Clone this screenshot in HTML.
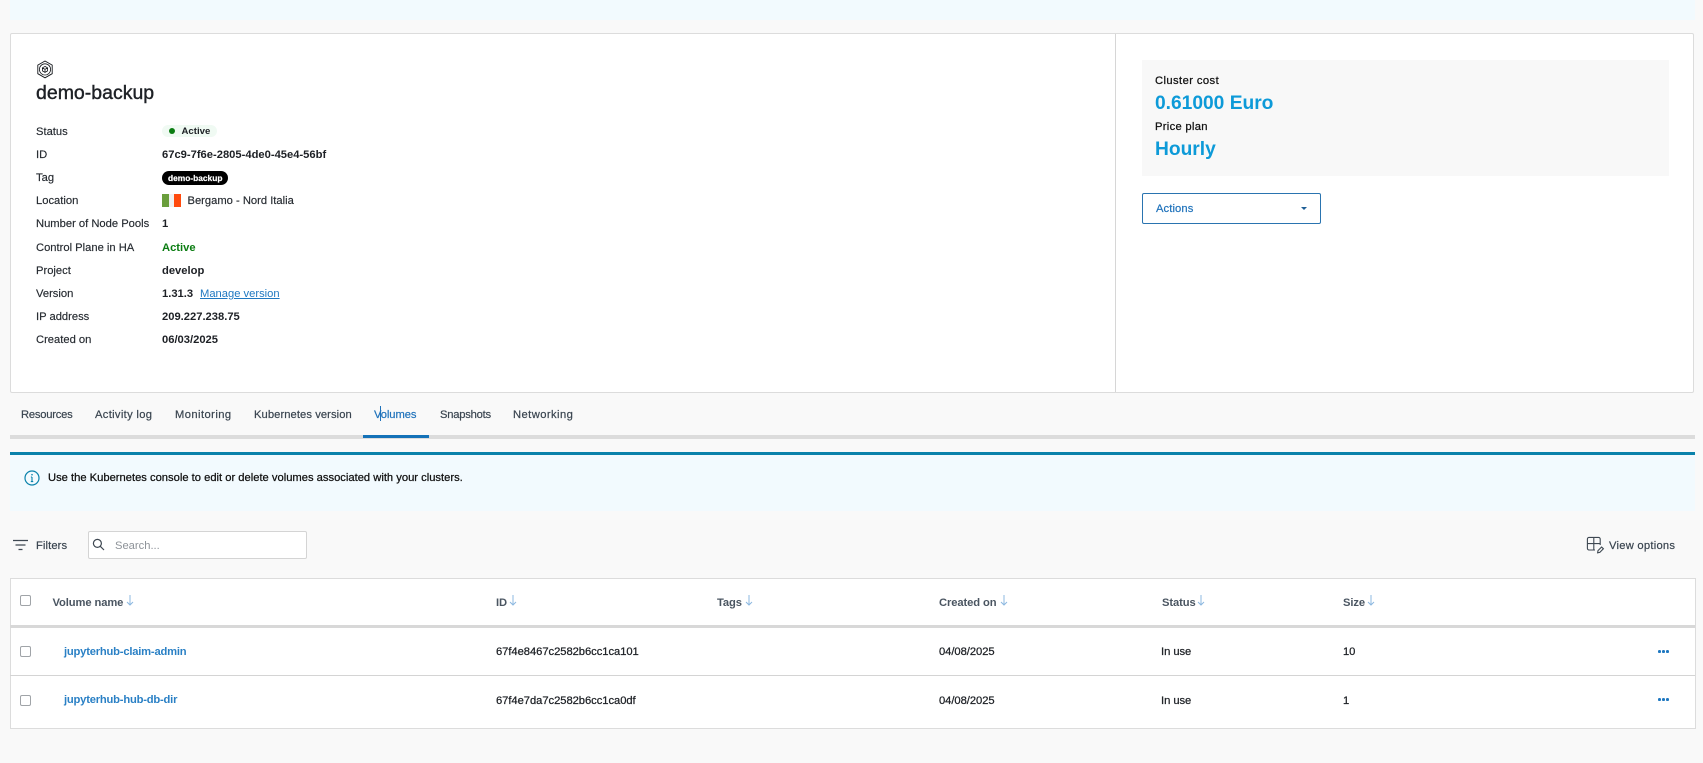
<!DOCTYPE html>
<html><head><meta charset="utf-8"><style>
html,body{margin:0;padding:0}
body{width:1703px;height:763px;background:#f9f9f9;position:relative;overflow:hidden;font-family:"Liberation Sans",Arial,sans-serif;font-size:11.2px;color:#1d2025}
.a{position:absolute;white-space:nowrap}
.t{position:absolute;white-space:nowrap;line-height:14px;height:14px}
b,.b{font-weight:700}
.lbl{left:36px;color:#252a30;-webkit-text-stroke:.15px #252a30}
.val{left:162px;font-weight:700;color:#1d2025}
.tab{top:408px;color:#3a4550;-webkit-text-stroke:.2px #3a4550}
.th{top:596px;font-weight:700;color:#4a5561;letter-spacing:-.1px}
.td{color:#1d2025;-webkit-text-stroke:.25px #1d2025;letter-spacing:-.04px}
.lnk{left:64px;color:#2a80c5;font-weight:700;letter-spacing:-.2px}
.cb{position:absolute;left:20px;width:9px;height:9px;border:1px solid #a0a4a8;border-bottom-width:1.5px;border-radius:2px;background:#fff}
.dots{position:absolute;left:1658px;color:#1f78c1;display:flex;gap:1.5px}
.dots i{display:block;width:2.6px;height:2.6px;border-radius:50%;background:#1f78c1}
</style></head><body>

<div class="a" style="left:10px;top:0;width:1685px;height:20px;background:#f2fafe"></div>

<div class="a" style="left:10px;top:33px;width:1682px;height:358px;background:#fff;border:1px solid #dcdcdc;border-radius:2px"></div>
<div class="a" style="left:1115px;top:34px;width:1px;height:358px;background:#d6d6d6"></div>

<svg class="a" style="left:36px;top:60px" width="18" height="19" viewBox="0 0 18 19" fill="none" stroke="#15181c" stroke-width=".9">
<path d="M9 1 16.2 5.1V13.7L9 17.8 1.8 13.7V5.1Z"/>
<circle cx="9" cy="9.4" r="5.6" stroke-width=".8"/>
<path d="M9 6.4 11.6 7.9V10.9L9 12.4 6.4 10.9V7.9ZM6.4 7.9 9 9.4 11.6 7.9M9 9.4V12.4" stroke-width=".8"/>
</svg>
<div class="t" style="left:36px;top:82px;font-size:19.5px;line-height:22px;height:22px;color:#1d2025;-webkit-text-stroke:.4px #1d2025">demo-backup</div>

<div class="t lbl" style="top:125px">Status</div>
<div class="a" style="left:162px;top:125px;width:55px;height:12px;border-radius:6px;background:#f0faf3"></div>
<div class="a" style="left:169px;top:128px;width:6px;height:6px;border-radius:50%;background:#0b7d12"></div>
<div class="t b" style="left:181.5px;top:124.5px;font-size:9.6px;color:#1d2025">Active</div>

<div class="t lbl" style="top:148px">ID</div>
<div class="t val" style="top:148px">67c9-7f6e-2805-4de0-45e4-56bf</div>

<div class="t lbl" style="top:171px">Tag</div>
<div class="a" style="left:162px;top:171px;width:66px;height:14px;border-radius:7px;background:#000"></div>
<div class="t b" style="left:168px;top:171px;font-size:8.4px;color:#fff;-webkit-text-stroke:.2px #fff">demo-backup</div>

<div class="t lbl" style="top:194px">Location</div>
<div class="a" style="left:162px;top:194px;width:19px;height:13px;background:linear-gradient(90deg,#6a9e3c 0,#6a9e3c 7px,#f0f0f0 7px,#f0f0f0 12px,#ff4a0d 12px)"></div>
<div class="t" style="left:187.5px;top:194px;color:#252a30;-webkit-text-stroke:.15px #252a30">Bergamo - Nord Italia</div>

<div class="t lbl" style="top:217px">Number of Node Pools</div>
<div class="t val" style="top:217px">1</div>

<div class="t lbl" style="top:241px">Control Plane in HA</div>
<div class="t val" style="top:241px;color:#0b7d12">Active</div>

<div class="t lbl" style="top:264px">Project</div>
<div class="t val" style="top:264px">develop</div>

<div class="t lbl" style="top:287px">Version</div>
<div class="t val" style="top:287px">1.31.3</div>
<div class="t" style="left:200px;top:287px;color:#1f78c1;text-decoration:underline">Manage version</div>

<div class="t lbl" style="top:310px">IP address</div>
<div class="t val" style="top:310px">209.227.238.75</div>

<div class="t lbl" style="top:333px">Created on</div>
<div class="t val" style="top:333px">06/03/2025</div>

<div class="a" style="left:1142px;top:60px;width:527px;height:116px;background:#f8f8f8"></div>
<div class="t" style="left:1155px;top:74px;color:#111;letter-spacing:.42px;-webkit-text-stroke:.25px #111">Cluster cost</div>
<div class="t b" style="left:1155px;top:92px;height:24px;line-height:24px;font-size:19.2px;color:#0d9ad8">0.61000 Euro</div>
<div class="t" style="left:1155px;top:120px;color:#111;letter-spacing:.3px;-webkit-text-stroke:.25px #111">Price plan</div>
<div class="t b" style="left:1155px;top:138px;height:24px;line-height:24px;font-size:19.2px;color:#0d9ad8">Hourly</div>

<div class="a" style="left:1142px;top:193px;width:177px;height:29px;border:1px solid #2a74b0;border-radius:2px;background:#fff"></div>
<div class="t" style="left:1156px;top:202px;color:#1f72bb;letter-spacing:.1px;-webkit-text-stroke:.2px #1f72bb">Actions</div>
<div class="a" style="left:1301px;top:207px;width:0;height:0;border-left:3px solid transparent;border-right:3px solid transparent;border-top:3px solid #1f5f96"></div>

<div class="t tab" style="left:21px;letter-spacing:-.22px">Resources</div>
<div class="t tab" style="left:95px;letter-spacing:.32px">Activity log</div>
<div class="t tab" style="left:175px;letter-spacing:.43px">Monitoring</div>
<div class="t tab" style="left:254px;letter-spacing:.08px">Kubernetes version</div>
<div class="t tab" style="left:374px;letter-spacing:-.08px;color:#1f72bb;-webkit-text-stroke:.2px #1f72bb">Volumes</div>
<div class="t tab" style="left:440px;letter-spacing:-.22px">Snapshots</div>
<div class="t tab" style="left:513px;letter-spacing:.43px">Networking</div>
<div class="a" style="left:380px;top:406px;width:1px;height:15px;background:#1f72bb"></div>
<div class="a" style="left:10px;top:435px;width:1685px;height:4px;background:#dcdcdc"></div>
<div class="a" style="left:363px;top:435px;width:66px;height:3px;background:#1472b8"></div>

<div class="a" style="left:10px;top:452px;width:1685px;height:59px;background:#f2fafe"></div>
<div class="a" style="left:10px;top:452px;width:1685px;height:3px;background:#0a82ab"></div>
<svg class="a" style="left:23.5px;top:470px" width="16" height="16" viewBox="0 0 16 16" fill="none" stroke="#0a82ab" stroke-width="1.2"><circle cx="8" cy="8" r="7"/><path d="M8 7v4.4M6.8 11.6h2.4M6.9 7h1.1" stroke-width="1.1"/><circle cx="8" cy="4.7" r=".8" fill="#0a82ab" stroke="none"/></svg>
<div class="t" style="left:48px;top:471px;color:#111;-webkit-text-stroke:.25px #111">Use the Kubernetes console to edit or delete volumes associated with your clusters.</div>

<svg class="a" style="left:13px;top:538px" width="15" height="14" viewBox="0 0 15 14" fill="none" stroke="#3e4852" stroke-width="1.2"><path d="M0 2.5H15M2.5 7H12.5M5.5 11.5H9.5"/></svg>
<div class="t" style="left:36px;top:539px;color:#3a4550;letter-spacing:.1px;-webkit-text-stroke:.2px #3a4550">Filters</div>
<div class="a" style="left:88px;top:531px;width:217px;height:26px;background:#fff;border:1px solid #d4d4d4;border-radius:2px"></div>
<svg class="a" style="left:92px;top:538px" width="13" height="13" viewBox="0 0 13 13" fill="none" stroke="#3e4852" stroke-width="1.2"><circle cx="5.4" cy="5.4" r="4"/><path d="M8.3 8.3 12 12"/></svg>
<div class="t" style="left:115px;top:539px;color:#8d9298">Search...</div>

<svg class="a" style="left:1586px;top:536px" width="19" height="18" viewBox="0 0 19 18" fill="none" stroke="#3e4852" stroke-width="1.1"><path d="M9 14H3a1.6 1.6 0 0 1-1.6-1.6V3A1.6 1.6 0 0 1 3 1.4h9.6A1.6 1.6 0 0 1 14.2 3V9M1.4 7.6H14.2M7.8 1.4V14"/><path d="M11.6 16.8l.4-2.2 3.6-3.6 1.8 1.8-3.6 3.6z"/></svg>
<div class="t" style="left:1609px;top:539px;color:#3a4550;letter-spacing:.25px;-webkit-text-stroke:.2px #3a4550">View options</div>

<div class="a" style="left:10px;top:578px;width:1684px;height:149px;background:#fff;border:1px solid #dcdcdc"></div>
<div class="a" style="left:10px;top:625px;width:1685px;height:3px;background:#d8d8d8"></div>
<div class="a" style="left:10px;top:675px;width:1685px;height:1px;background:#d4d4d4"></div>

<div class="cb" style="top:595px"></div>
<div class="cb" style="top:646px"></div>
<div class="cb" style="top:695px"></div>

<div class="t th" style="left:52.5px">Volume name</div>
<div class="t th" style="left:496px">ID</div>
<div class="t th" style="left:717px">Tags</div>
<div class="t th" style="left:939px">Created on</div>
<div class="t th" style="left:1162px">Status</div>
<div class="t th" style="left:1343px">Size</div>
<svg class="a" style="left:126px;top:595px" width="8" height="11" viewBox="0 0 8 11" fill="none" stroke="#8cb8e0"><path d="M4 0V10M1 7l3 3 3-3"/></svg>
<svg class="a" style="left:509px;top:595px" width="8" height="11" viewBox="0 0 8 11" fill="none" stroke="#8cb8e0"><path d="M4 0V10M1 7l3 3 3-3"/></svg>
<svg class="a" style="left:745px;top:595px" width="8" height="11" viewBox="0 0 8 11" fill="none" stroke="#8cb8e0"><path d="M4 0V10M1 7l3 3 3-3"/></svg>
<svg class="a" style="left:1000px;top:595px" width="8" height="11" viewBox="0 0 8 11" fill="none" stroke="#8cb8e0"><path d="M4 0V10M1 7l3 3 3-3"/></svg>
<svg class="a" style="left:1197px;top:595px" width="8" height="11" viewBox="0 0 8 11" fill="none" stroke="#8cb8e0"><path d="M4 0V10M1 7l3 3 3-3"/></svg>
<svg class="a" style="left:1367px;top:595px" width="8" height="11" viewBox="0 0 8 11" fill="none" stroke="#8cb8e0"><path d="M4 0V10M1 7l3 3 3-3"/></svg>

<div class="t lnk" style="top:645px">jupyterhub-claim-admin</div>
<div class="t td" style="left:496px;top:645px">67f4e8467c2582b6cc1ca101</div>
<div class="t td" style="left:939px;top:645px">04/08/2025</div>
<div class="t td" style="left:1161px;top:645px">In use</div>
<div class="t td" style="left:1343px;top:645px">10</div>
<div class="dots" style="top:650px"><i></i><i></i><i></i></div>

<div class="t lnk" style="top:693px">jupyterhub-hub-db-dir</div>
<div class="t td" style="left:496px;top:694px">67f4e7da7c2582b6cc1ca0df</div>
<div class="t td" style="left:939px;top:694px">04/08/2025</div>
<div class="t td" style="left:1161px;top:694px">In use</div>
<div class="t td" style="left:1343px;top:694px">1</div>
<div class="dots" style="top:698px"><i></i><i></i><i></i></div>

</body></html>
